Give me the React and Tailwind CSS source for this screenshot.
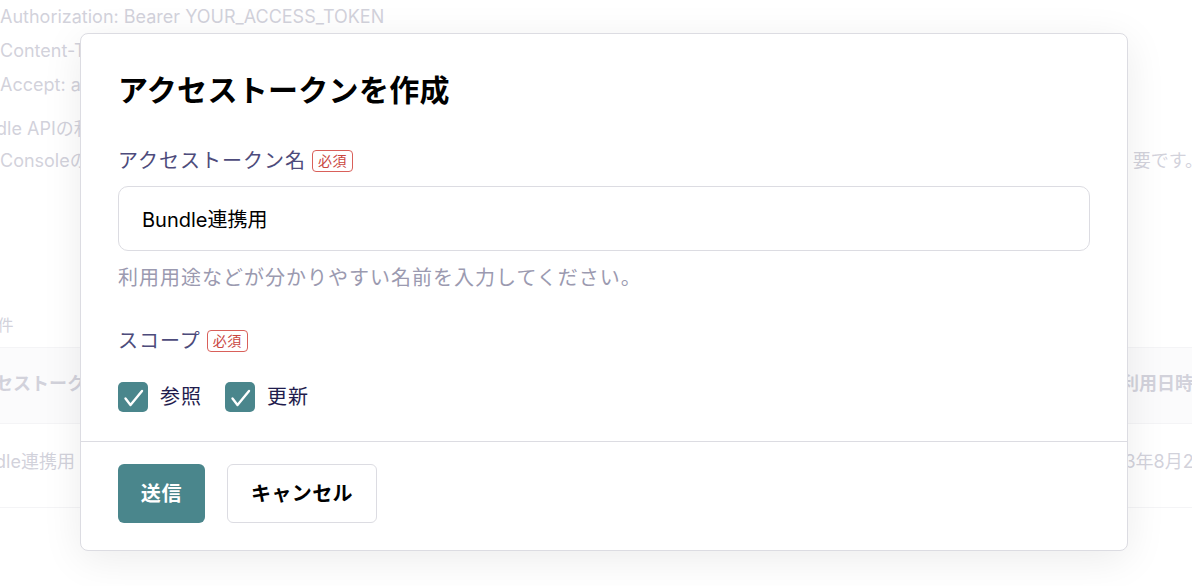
function Badge() {
  return (
    <span className="ml-[6px] inline-flex h-[22px] items-center rounded-[4px] border border-[#d9605a] px-[5px] text-[14px] leading-none tracking-[0.04em] text-[#c9463f]">
      必須
    </span>
  );
}

function Checkbox({ label }) {
  return (
    <label className="flex items-center gap-[12px]">
      <span className="flex h-[30px] w-[30px] items-center justify-center rounded-[5px] bg-[#4a868c]">
        <svg viewBox="0 0 30 30" className="h-[30px] w-[30px]" fill="none">
          <polyline
            points="7.5,16.5 12.5,23 24,9"
            stroke="white"
            strokeWidth="2.4"
            strokeLinecap="round"
            strokeLinejoin="round"
          />
        </svg>
      </span>
      <span className="text-[20px] tracking-[0.05em] text-[#1f1c4d]">{label}</span>
    </label>
  );
}

function BackgroundPage() {
  return (
    <div className="text-[#9b9ab0] text-[18px]">
      <div className="leading-[34px]">
        <p>Authorization: Bearer YOUR_ACCESS_TOKEN</p>
        <p>Content-Type: application/json</p>
        <p>Accept: application/json</p>
      </div>
      <div className="mt-[11px] ml-[-37px] leading-[32px]">
        <p>Bundle APIの利用にはアクセストークンが必要です。</p>
        <p className="ml-[37px] flex justify-between">
          <span>Consoleの設定画面からアクセストークンを作成してください。</span>
          <span className="mr-[-11px]">要です。</span>
        </p>
      </div>
      <p className="mt-[136px] ml-[-25px] text-[16px] leading-[24px]">全1件</p>
      <div className="mt-[10px] border-t border-[#e6e6ec]">
        <div className="flex h-[76px] items-center justify-between bg-[#f7f7f9] border-b border-[#e6e6ec] font-bold">
          <span className="ml-[-40px] mt-[-4px]">アクセストークン名</span>
          <span className="mr-[-1px] mt-[-4px]">最終利用日時</span>
        </div>
        <div className="flex h-[84px] items-start justify-between border-b border-[#e6e6ec] pt-[24px]">
          <span className="ml-[-38px]">Bundle連携用</span>
          <span className="mr-[-31px]">2023年8月24日</span>
        </div>
      </div>
    </div>
  );
}

export default function App() {
  return (
    <div
      className="relative h-[586px] w-[1192px] overflow-hidden bg-white"
      style={{ fontFamily: 'Inter, "Noto Sans CJK JP", sans-serif' }}
    >
      <BackgroundPage />
      <div className="absolute inset-0 bg-white/[0.55] pl-[80px] pt-[33px]">
        <div className="w-[1048px] rounded-[8px] border border-[#dcdce2] bg-white shadow-[0_8px_40px_rgba(0,0,0,0.08)]">
          <div className="px-[37px] pt-[34px] pb-[29px]">
            <h2 className="text-[30px] font-bold leading-[45px] tracking-[0.01em] text-black">
              アクセストークンを作成
            </h2>

            <div className="mt-[33px] flex items-center leading-[30px]">
              <span className="text-[20px] tracking-[0.05em] text-[#4d4b7b]">アクセストークン名</span>
              <Badge />
            </div>
            <input
              defaultValue="Bundle連携用"
              className="mt-[10px] h-[65px] w-full rounded-[10px] border border-[#dcdce2] px-[23px] text-[20px] text-black outline-none"
            />
            <p className="mt-[12px] text-[20px] leading-[30px] tracking-[0.05em] text-[#9b9ab0]">
              利用用途などが分かりやすい名前を入力してください。
            </p>

            <div className="mt-[33px] flex items-center leading-[30px]">
              <span className="text-[20px] tracking-[0.05em] text-[#4d4b7b]">スコープ</span>
              <Badge />
            </div>
            <div className="mt-[26px] flex items-center gap-[23px]">
              <Checkbox label="参照" />
              <Checkbox label="更新" />
            </div>
          </div>

          <div className="flex gap-[22px] border-t border-[#dcdce2] px-[37px] pt-[22px] pb-[27px]">
            <button className="h-[59px] w-[87px] rounded-[6px] bg-[#4a868c] text-[20px] font-bold tracking-[0.04em] text-white">
              送信
            </button>
            <button className="h-[59px] w-[150px] rounded-[6px] border border-[#dcdce2] bg-white text-[20px] font-bold tracking-[0.02em] text-black">
              キャンセル
            </button>
          </div>
        </div>
      </div>
    </div>
  );
}
